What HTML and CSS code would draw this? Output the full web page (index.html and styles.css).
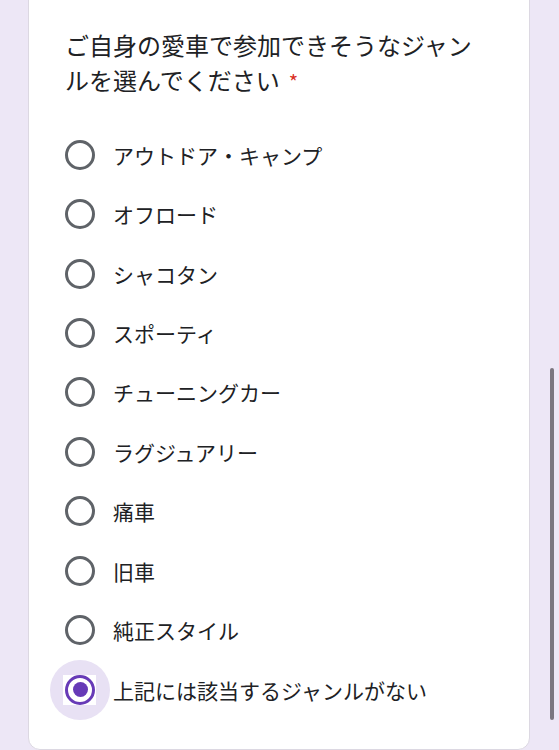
FILE: index.html
```html
<!DOCTYPE html>
<html lang="ja">
<head>
<meta charset="utf-8">
<title>ジャンル選択</title>
<link rel="stylesheet" href="styles.css">
</head>
<body>
<div class="page">
  <div class="card">
    <div class="question">ご自身の愛車で参加できそうなジャンルを選んでください<span class="req">*</span></div>
    <div class="options">
      <div class="option"><span class="radio-wrap"><span class="radio"></span></span><span class="label">アウトドア・キャンプ</span></div>
      <div class="option"><span class="radio-wrap"><span class="radio"></span></span><span class="label">オフロード</span></div>
      <div class="option"><span class="radio-wrap"><span class="radio"></span></span><span class="label">シャコタン</span></div>
      <div class="option"><span class="radio-wrap"><span class="radio"></span></span><span class="label">スポーティ</span></div>
      <div class="option"><span class="radio-wrap"><span class="radio"></span></span><span class="label">チューニングカー</span></div>
      <div class="option"><span class="radio-wrap"><span class="radio"></span></span><span class="label">ラグジュアリー</span></div>
      <div class="option"><span class="radio-wrap"><span class="radio"></span></span><span class="label">痛車</span></div>
      <div class="option"><span class="radio-wrap"><span class="radio"></span></span><span class="label">旧車</span></div>
      <div class="option"><span class="radio-wrap"><span class="radio"></span></span><span class="label">純正スタイル</span></div>
      <div class="option"><span class="radio-wrap selected"><span class="radio checked"></span></span><span class="label">上記には該当するジャンルがない</span></div>
    </div>
  </div>
</div>
<div class="scrollbar"></div>
</body>
</html>
```

FILE: styles.css
```css
html, body {
  margin: 0;
  padding: 0;
  height: 100%;
  overflow: hidden;
}

body {
  background: #ede7f6;
  font-family: "Noto Sans CJK JP", "Noto Sans", sans-serif;
  color: #202124;
}

.page {
  padding: 0 29px 0 28px;
}

.card {
  background: #ffffff;
  border: 1px solid #dcd8e2;
  border-radius: 12px;
  margin-top: -12px;
  padding: 38px 36px 30px 36px;
}

.question {
  font-size: 24px;
  line-height: 35px;
  padding-right: 20px;
}

.req {
  display: inline-block;
  margin-left: 9px;
  color: #d93025;
  font-size: 20px;
  line-height: 20px;
}

.options {
  margin-top: 28px;
  display: flex;
  flex-direction: column;
}

.option {
  display: flex;
  align-items: center;
  height: 59.45px;
}

.radio-wrap {
  position: relative;
  isolation: isolate;
  width: 30px;
  height: 30px;
  margin-right: 18px;
  flex-shrink: 0;
}

.radio {
  display: block;
  position: relative;
  box-sizing: border-box;
  width: 30px;
  height: 30px;
  border: 3px solid #5f6368;
  border-radius: 50%;
}

.radio-wrap.selected::before {
  content: "";
  position: absolute;
  left: -15px;
  top: -15px;
  width: 60px;
  height: 60px;
  border-radius: 50%;
  background: #e8e1f4;
  z-index: -1;
}

.radio-wrap.selected::after {
  content: "";
  position: absolute;
  left: -2px;
  top: 0;
  width: 33px;
  height: 30px;
  background: #ffffff;
  z-index: -1;
}

.radio.checked {
  border-color: #673ab7;
}

.radio.checked::after {
  content: "";
  position: absolute;
  left: 4.5px;
  top: 4.5px;
  width: 15px;
  height: 15px;
  border-radius: 50%;
  background: #673ab7;
}

.label {
  font-size: 21px;
  line-height: 30px;
  white-space: nowrap;
}

.scrollbar {
  position: absolute;
  left: 550px;
  top: 368px;
  width: 4px;
  height: 352px;
  border-radius: 2px;
  background: #7b7680;
}
```
